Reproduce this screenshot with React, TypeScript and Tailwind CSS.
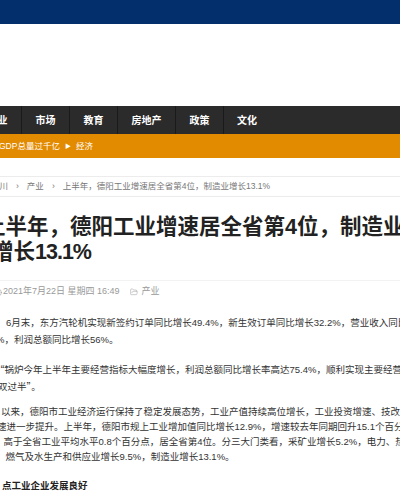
import { Clock, FolderOpen } from "lucide-react";

const navItems = ["产业", "市场", "教育", "房地产", "政策", "文化"];

const cjk = "font-['Noto_Sans_CJK_SC',sans-serif]";

export default function App() {
  return (
    <div className="w-[400px] h-[500px] overflow-hidden bg-white font-['Liberation_Sans','Noto_Sans_CJK_SC',sans-serif]">
      {/* top brand bar */}
      <div className="h-[24px] bg-[#03306d]" />
      <div className="h-[82px]" />

      {/* channel nav */}
      <nav className="h-[28px] bg-[#2b2b2b] flex ml-[-26px] text-white text-[10px] font-bold">
        {navItems.map((item, i) => (
          <div
            key={item}
            className={
              i === navItems.length - 1
                ? "flex items-center px-[13px]"
                : "flex items-center px-[13.5px] border-r border-[#1a1a1a]"
            }
          >
            {item}
          </div>
        ))}
      </nav>

      {/* orange ticker */}
      <div className="h-[24px] bg-[#e28a00] flex items-center text-white text-[8.5px] whitespace-nowrap">
        <span className="ml-[-1px]">GDP总量过千亿</span>
        <span className="mx-[5px] text-[6px]">▶</span>
        <span>经济</span>
      </div>

      {/* breadcrumb */}
      <div className="mt-[18px] h-[21px] border-y border-[#ececec] flex items-center text-[8.5px] text-[#777] whitespace-nowrap">
        <span className="ml-[-9px]">四川</span>
        <span className="mx-[8px]">›</span>
        <span>产业</span>
        <span className="mx-[8px]">›</span>
        <span>上半年，德阳工业增速居全省第4位，制造业增长13.1%</span>
      </div>

      {/* headline */}
      <h1 className="mt-[18px] text-[21.5px] leading-[25px] font-bold text-[#222] whitespace-nowrap">
        <div className="ml-[-16px]">上半年，德阳工业增速居全省第4位，制造业</div>
        <div className="ml-[-8px]">
          增长<span className="tracking-[-1px]">13.1%</span>
        </div>
      </h1>

      <div className="mt-[15px] h-px bg-[#f2f2f2]" />

      {/* meta */}
      <div className="mt-[4px] h-[14px] flex items-center text-[9px] text-[#999] whitespace-nowrap">
        <Clock className="ml-[-7px] mr-[1px] shrink-0" size={9} strokeWidth={1.5} />
        <span>2021年7月22日 星期四 16:49</span>
        <FolderOpen className="ml-[10px] mr-[4px] shrink-0" size={8} strokeWidth={1.5} />
        <span>产业</span>
      </div>

      {/* body */}
      <div className="text-[9.5px] text-[#333] whitespace-nowrap">
        <div className="mt-[14.5px] leading-[17px]">
          <div className="ml-[6px]">6月末，东方汽轮机实现新签约订单同比增长49.4%，新生效订单同比增长32.2%，营业收入同比增长</div>
          <div className="ml-[-4px]">%，利润总额同比增长56%。</div>
        </div>
        <div className="mt-[13.5px] leading-[17px]">
          <div className="ml-[-5px]">
            <span className={cjk}>“</span>锅炉今年上半年主要经营指标大幅度增长，利润总额同比增长率高达75.4%，顺利实现主要经营指标
          </div>
          <div className="ml-[-2px]">
            双过半<span className={cjk}>”</span>。
          </div>
        </div>
        <div className="mt-[8.5px] leading-[15px]">
          <div className="ml-[1px]">以来，德阳市工业经济运行保持了稳定发展态势，工业产值持续高位增长，工业投资增速、技改投资</div>
          <div className="ml-[-3px]">速进一步提升。上半年，德阳市规上工业增加值同比增长12.9%，增速较去年同期回升15.1个百分点</div>
          <div className="ml-[-6px]">，高于全省工业平均水平0.8个百分点，居全省第4位。分三大门类看，采矿业增长5.2%，电力、热力</div>
          <div className="ml-[-4px]">、燃气及水生产和供应业增长9.5%，制造业增长13.1%。</div>
        </div>
        <div className="mt-[14.5px] leading-[16px] ml-[2px] font-bold text-[#222]">点工业企业发展良好</div>
      </div>
    </div>
  );
}
